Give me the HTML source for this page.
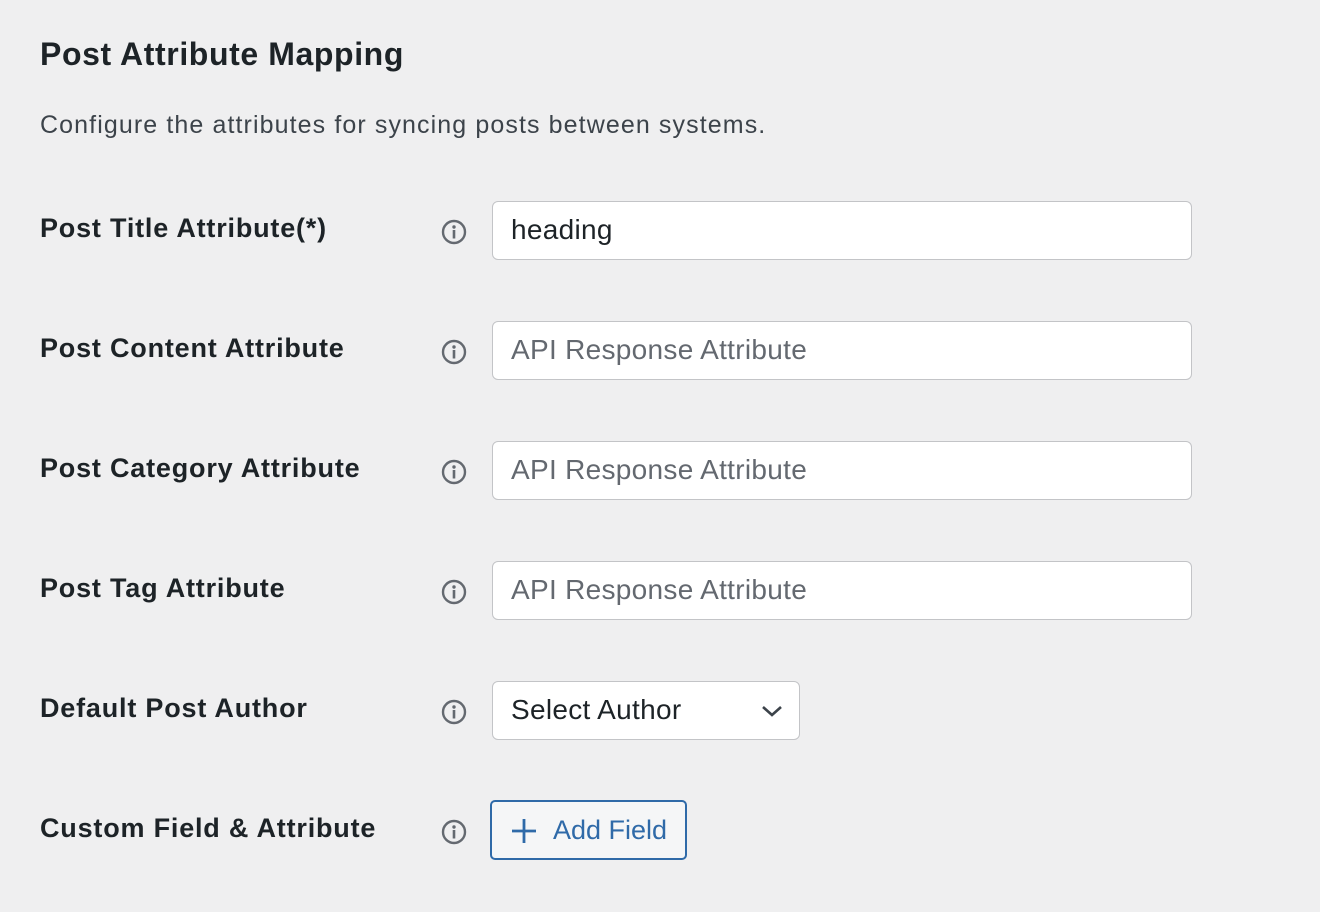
<!DOCTYPE html>
<html><head><style>
body{margin:0;width:1320px;height:912px;background:#efeff0;font-family:"Liberation Sans",sans-serif;color:#1d2327;position:relative;overflow:hidden}
.a{position:absolute}
h1{position:absolute;left:40px;top:34px;margin:0;font-size:32px;font-weight:bold;line-height:40px;letter-spacing:0.6px}
.desc{left:40px;top:110px;font-size:25px;color:#3c434a;line-height:30px;letter-spacing:1.1px}
.lbl{left:40px;font-size:27px;font-weight:bold;line-height:32px;letter-spacing:0.8px}
.ic{left:441px}
.inp{left:492px;background:#fff;border:1.5px solid #c3c4c7;border-radius:6px;font-size:28px;line-height:56px;padding-left:18px;box-sizing:border-box;width:700px;height:59px;letter-spacing:0.3px}
.ph{color:#646970}
</style></head><body>
<h1>Post Attribute Mapping</h1>
<div class="a desc">Configure the attributes for syncing posts between systems.</div>

<div class="a lbl" style="top:212px">Post Title Attribute(*)</div>
<div class="a lbl" style="top:332px">Post Content Attribute</div>
<div class="a lbl" style="top:452px">Post Category Attribute</div>
<div class="a lbl" style="top:572px">Post Tag Attribute</div>
<div class="a lbl" style="top:692px">Default Post Author</div>
<div class="a lbl" style="top:812px">Custom Field &amp; Attribute</div>

<svg class="a ic" style="top:219px" width="26" height="26" viewBox="0 0 26 26"><circle cx="13" cy="13" r="11" fill="none" stroke="#646970" stroke-width="2.4"/><circle cx="13" cy="8" r="1.7" fill="#646970"/><rect x="11.7" y="11" width="2.6" height="8.5" fill="#646970"/></svg>
<svg class="a ic" style="top:339px" width="26" height="26" viewBox="0 0 26 26"><circle cx="13" cy="13" r="11" fill="none" stroke="#646970" stroke-width="2.4"/><circle cx="13" cy="8" r="1.7" fill="#646970"/><rect x="11.7" y="11" width="2.6" height="8.5" fill="#646970"/></svg>
<svg class="a ic" style="top:459px" width="26" height="26" viewBox="0 0 26 26"><circle cx="13" cy="13" r="11" fill="none" stroke="#646970" stroke-width="2.4"/><circle cx="13" cy="8" r="1.7" fill="#646970"/><rect x="11.7" y="11" width="2.6" height="8.5" fill="#646970"/></svg>
<svg class="a ic" style="top:579px" width="26" height="26" viewBox="0 0 26 26"><circle cx="13" cy="13" r="11" fill="none" stroke="#646970" stroke-width="2.4"/><circle cx="13" cy="8" r="1.7" fill="#646970"/><rect x="11.7" y="11" width="2.6" height="8.5" fill="#646970"/></svg>
<svg class="a ic" style="top:699px" width="26" height="26" viewBox="0 0 26 26"><circle cx="13" cy="13" r="11" fill="none" stroke="#646970" stroke-width="2.4"/><circle cx="13" cy="8" r="1.7" fill="#646970"/><rect x="11.7" y="11" width="2.6" height="8.5" fill="#646970"/></svg>
<svg class="a ic" style="top:819px" width="26" height="26" viewBox="0 0 26 26"><circle cx="13" cy="13" r="11" fill="none" stroke="#646970" stroke-width="2.4"/><circle cx="13" cy="8" r="1.7" fill="#646970"/><rect x="11.7" y="11" width="2.6" height="8.5" fill="#646970"/></svg>

<div class="a inp" style="top:201px">heading</div>
<div class="a inp ph" style="top:321px">API Response Attribute</div>
<div class="a inp ph" style="top:441px">API Response Attribute</div>
<div class="a inp ph" style="top:561px">API Response Attribute</div>
<div class="a inp" style="top:681px;width:308px">Select Author
<svg class="a" style="left:268px;top:22px" width="22" height="14" viewBox="0 0 22 14"><path d="M2 3 L11 11 L20 3" fill="none" stroke="#3c434a" stroke-width="2.6"/></svg></div>

<div class="a" style="left:490px;top:800px;width:197px;height:60px;box-sizing:border-box;border:2px solid #2f6aa8;border-radius:5px;background:#f5f6f7;color:#2f6aa8;font-size:27px;line-height:56px">
<svg class="a" style="left:18px;top:15px" width="28" height="28" viewBox="0 0 28 28"><path d="M14 2V26M2 14H26" stroke="#2f6aa8" stroke-width="2.8"/></svg>
<span class="a" style="left:61px;top:0">Add Field</span></div>
</body></html>
